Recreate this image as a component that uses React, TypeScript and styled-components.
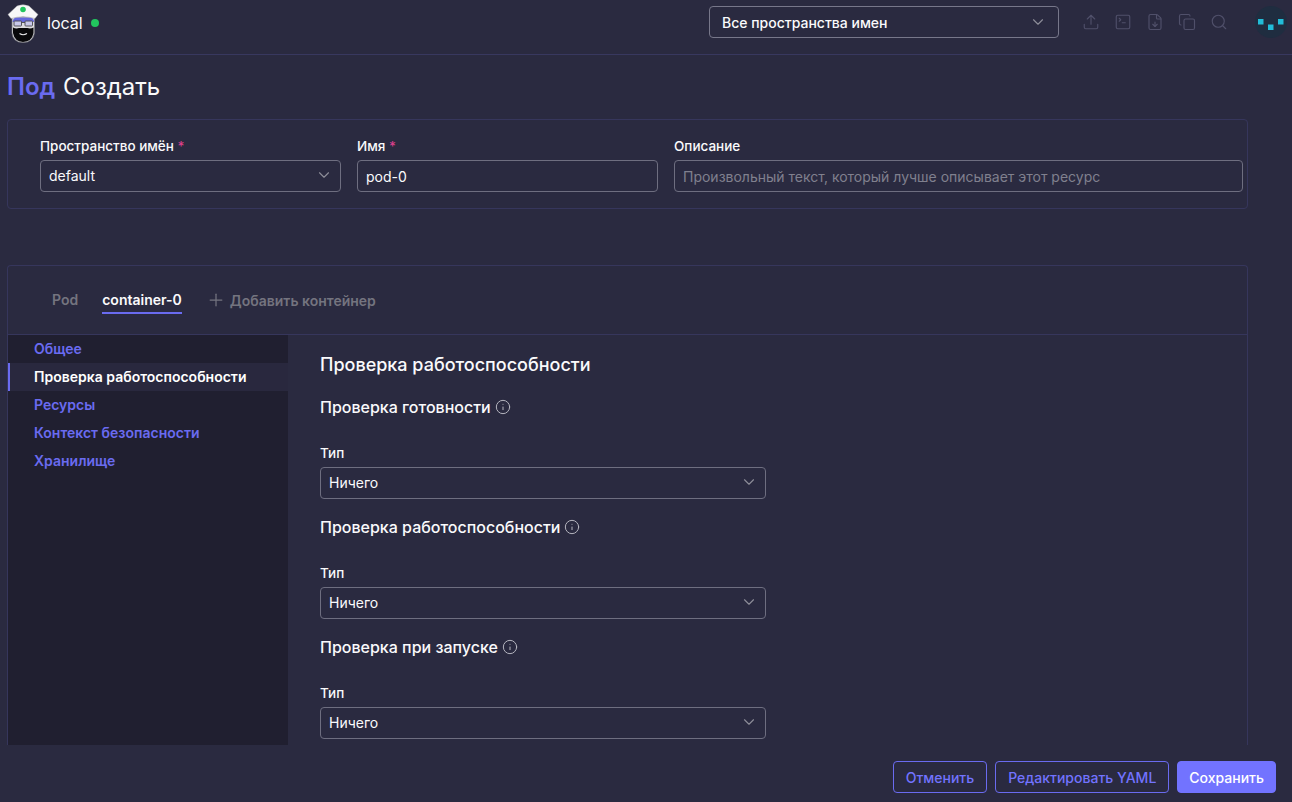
import React from 'react';
import styled, { createGlobalStyle } from 'styled-components';
import { ChevronDown, Plus, Info, Upload, SquareTerminal, FileDown, Copy, Search } from 'lucide-react';

const GlobalStyle = createGlobalStyle`
  html, body {
    margin: 0;
    height: 100%;
    background: #2a2a40;
    color: #fafafc;
    font-family: Inter, "Noto Sans", sans-serif;
    overflow: hidden;
  }
  * { box-sizing: border-box; }
`;

const SIDE_ITEMS = ['Общее', 'Проверка работоспособности', 'Ресурсы', 'Контекст безопасности', 'Хранилище'];
const PROBES = ['Проверка готовности', 'Проверка работоспособности', 'Проверка при запуске'];

const Logo = () => (
  <svg width="34" height="40" viewBox="0 0 34 40">
    <path d="M6 14 V30 Q7 39.500 17 39.500 Q27 39.500 28.500 30 V14 Z" fill="#dcdce0" stroke="#77777d" strokeWidth="0.7" />
    <path d="M6.500 19 Q7 15 10 14.500 H24.500 Q28 15 28 19 Z" fill="#6668dc" />
    <path d="M7 24.500 Q10 26 13 25 H21.500 Q24.500 26 27.500 24.500 V30 Q26 38.500 17 39 Q8.500 38.500 7 30 Z" fill="#08080a" />
    <path d="M13.500 30.500 Q17 33 21 30.500" stroke="#e8e8ea" strokeWidth="1.100" fill="none" />
    <rect x="8" y="18" width="7.500" height="5" rx="0.800" fill="#c9c9ea" stroke="#45454c" strokeWidth="0.900" />
    <rect x="19" y="18" width="7.500" height="5" rx="0.800" fill="#c9c9ea" stroke="#45454c" strokeWidth="0.900" />
    <path d="M15.500 19.500 H19" stroke="#45454c" strokeWidth="0.900" />
    <path d="M2 11.500 L11 3 Q17 0.500 23 3 L32 11.500 L29 15.500 Q17 12 5 15.500 Z" fill="#f8f8f8" stroke="#a9a9ae" strokeWidth="0.500" />
    <circle cx="17" cy="6.500" r="2.800" fill="#22c55e" />
  </svg>
);

const Mark = () => (
  <svg width="32" height="32" viewBox="0 0 32 32">
    <circle cx="16" cy="16" r="16" fill="#1f2d40" />
    <rect x="3" y="13" width="5.500" height="5.500" fill="#22bcd8" />
    <rect x="13" y="18.500" width="5.500" height="5.500" fill="#22bcd8" />
    <rect x="23" y="13" width="5.500" height="5.500" fill="#22bcd8" />
  </svg>
);

const Select = ({ value }: { value: string }) => (
  <SelectBox>
    {value}
    <ChevronDown size={18} strokeWidth={1.5} color="#8d8d98" />
  </SelectBox>
);

export default function App() {
  return (
    <Page>
      <GlobalStyle />
      <Header>
        <Brand>
          <Logo />
          <ClusterName>local</ClusterName>
          <StatusDot />
        </Brand>
        <HeaderRight>
          <NamespaceSelect>
            Все пространства имен
            <ChevronDown size={18} strokeWidth={1.5} color="#8d8d98" />
          </NamespaceSelect>
          <Tools>
            <Upload size={18} strokeWidth={1.5} />
            <SquareTerminal size={18} strokeWidth={1.5} />
            <FileDown size={18} strokeWidth={1.5} />
            <Copy size={18} strokeWidth={1.5} />
            <Search size={18} strokeWidth={1.5} />
          </Tools>
          <MarkSlot>
            <Mark />
          </MarkSlot>
        </HeaderRight>
      </Header>

      <Title>
        <TitleType>Под</TitleType> Создать
      </Title>

      <MetaPanel>
        <Field $width={301}>
          <Label>
            Пространство имён <Required>*</Required>
          </Label>
          <Select value="default" />
        </Field>
        <Field $width={301}>
          <Label>
            Имя <Required>*</Required>
          </Label>
          <Input>pod-0</Input>
        </Field>
        <Field $width={569}>
          <Label>Описание</Label>
          <Input $placeholder>Произвольный текст, который лучше описывает этот ресурс</Input>
        </Field>
      </MetaPanel>

      <FormPanel>
        <Tabs>
          <Tab>Pod</Tab>
          <Tab $active>container-0</Tab>
          <AddTab>
            <Plus size={20} strokeWidth={1.5} />
            Добавить контейнер
          </AddTab>
        </Tabs>
        <Body>
          <Sidebar>
            {SIDE_ITEMS.map((item, i) => (
              <SideItem key={item} $active={i === 1}>
                {item}
              </SideItem>
            ))}
          </Sidebar>
          <Content>
            <SectionTitle>Проверка работоспособности</SectionTitle>
            {PROBES.map((probe) => (
              <Probe key={probe}>
                <ProbeTitle>
                  {probe}
                  <Info size={16} strokeWidth={1.5} color="#b5b5bf" />
                </ProbeTitle>
                <ProbeField>
                  <Label>Тип</Label>
                  <Select value="Ничего" />
                </ProbeField>
              </Probe>
            ))}
          </Content>
        </Body>
      </FormPanel>

      <Footer>
        <OutlineButton>Отменить</OutlineButton>
        <OutlineButton>Редактировать YAML</OutlineButton>
        <PrimaryButton>Сохранить</PrimaryButton>
      </Footer>
    </Page>
  );
}

const Page = styled.div`
  width: 1292px;
  height: 802px;
  display: flex;
  flex-direction: column;
  overflow: hidden;
`;

const Header = styled.header`
  height: 55px;
  flex: none;
  display: flex;
  align-items: center;
  justify-content: space-between;
  border-bottom: 1px solid #38385f;
`;

const Brand = styled.div`
  display: flex;
  align-items: center;
  padding-left: 6px;
  margin-top: -8px;
`;

const ClusterName = styled.span`
  margin-left: 7px;
  font-size: 16px;
`;

const StatusDot = styled.span`
  width: 8px;
  height: 8px;
  margin-left: 8px;
  border-radius: 50%;
  background: #22c55e;
`;

const HeaderRight = styled.div`
  display: flex;
  align-items: center;
  margin-top: -10px;
`;

const NamespaceSelect = styled.div`
  width: 350px;
  height: 32px;
  padding: 0 11px 0 12px;
  display: flex;
  align-items: center;
  justify-content: space-between;
  border: 1px solid #77778a;
  border-radius: 4px;
  font-size: 14px;
  font-weight: 500;
`;

const Tools = styled.div`
  display: flex;
  gap: 14px;
  margin-left: 23px;
  color: #50506a;
`;

const MarkSlot = styled.div`
  display: flex;
  margin: 0 5px 0 27px;
`;

const Title = styled.h1`
  margin: 0;
  height: 64px;
  flex: none;
  padding: 16px 7px 0;
  font-size: 24px;
  line-height: 32px;
  font-weight: 400;
`;

const TitleType = styled.span`
  margin-right: 1px;
  color: #6a6bf0;
  font-weight: 600;
`;

const MetaPanel = styled.section`
  flex: none;
  height: 90px;
  margin: 0 44px 0 7px;
  padding: 17px 0 0 32px;
  display: flex;
  gap: 16px;
  border: 1px solid #36365c;
  border-radius: 4px;
`;

const Field = styled.div<{ $width: number }>`
  width: ${(p) => p.$width}px;
  display: flex;
  flex-direction: column;
  gap: 5px;
`;

const Label = styled.label`
  font-size: 13.5px;
  line-height: 18px;
  font-weight: 500;
`;

const Required = styled.span`
  color: #db3f8c;
`;

const SelectBox = styled.div`
  height: 32px;
  padding: 0 7px 2px 8px;
  display: flex;
  align-items: center;
  justify-content: space-between;
  border: 1px solid #6e6e80;
  border-radius: 4px;
  font-size: 14px;
`;

const Input = styled.div<{ $placeholder?: boolean }>`
  height: 32px;
  padding: 0 8px;
  display: flex;
  align-items: center;
  border: 1px solid #6e6e80;
  border-radius: 4px;
  font-size: 14px;
  color: ${(p) => (p.$placeholder ? '#80808e' : '#fafafc')};
`;

const FormPanel = styled.section`
  flex: none;
  height: 480px;
  margin: 56px 44px 0 7px;
  display: flex;
  flex-direction: column;
  border: 1px solid #36365c;
  border-bottom: none;
  border-radius: 4px 4px 0 0;
`;

const Tabs = styled.div`
  flex: none;
  height: 69px;
  padding: 19px 0 0 44px;
  display: flex;
  align-items: flex-start;
  gap: 24px;
  border-bottom: 1px solid #36365c;
`;

const Tab = styled.div<{ $active?: boolean }>`
  height: 29px;
  font-size: 14px;
  line-height: 30px;
  font-weight: 600;
  color: ${(p) => (p.$active ? '#fafafc' : '#74747f')};
  border-bottom: ${(p) => (p.$active ? '2px solid #6a6bf0' : 'none')};
`;

const AddTab = styled.div`
  display: flex;
  align-items: center;
  gap: 4px;
  height: 30px;
  font-size: 14px;
  font-weight: 600;
  color: #74747f;
`;

const Body = styled.div`
  flex: 1;
  min-height: 0;
  display: flex;
`;

const Sidebar = styled.nav`
  width: 280px;
  flex: none;
  background: #201f30;
`;

const SideItem = styled.div<{ $active?: boolean }>`
  height: 28px;
  padding: 0 0 2px ${(p) => (p.$active ? '24px' : '26px')};
  display: flex;
  align-items: center;
  font-size: 14px;
  font-weight: 600;
  color: ${(p) => (p.$active ? '#ffffff' : '#6a6bf0')};
  background: ${(p) => (p.$active ? '#29283e' : 'transparent')};
  border-left: ${(p) => (p.$active ? '2px solid #6a6bf0' : 'none')};
`;

const Content = styled.div`
  flex: 1;
  padding: 18px 32px 0;
`;

const SectionTitle = styled.h2`
  margin: 0 0 15px;
  font-size: 18px;
  line-height: 24px;
  font-weight: 500;
`;

const Probe = styled.div`
  display: flex;
  flex-direction: column;
`;

const ProbeTitle = styled.div`
  height: 30px;
  display: flex;
  align-items: center;
  gap: 4px;
  font-size: 16px;
  font-weight: 500;
`;

const ProbeField = styled.div`
  width: 446px;
  height: 90px;
  padding-top: 22px;
  display: flex;
  flex-direction: column;
  gap: 5px;
`;

const Footer = styled.footer`
  flex: 1;
  padding: 16px 16px 0 0;
  display: flex;
  justify-content: flex-end;
  align-items: flex-start;
  gap: 8px;
`;

const OutlineButton = styled.button`
  height: 32px;
  padding: 0 12px;
  background: transparent;
  border: 1px solid #6a6bf0;
  border-radius: 4px;
  font: 500 14px Inter, sans-serif;
  color: #7273ff;
`;

const PrimaryButton = styled(OutlineButton)`
  padding: 0 11px;
  background: #7273ff;
  border-color: #7273ff;
  color: #ffffff;
`;
